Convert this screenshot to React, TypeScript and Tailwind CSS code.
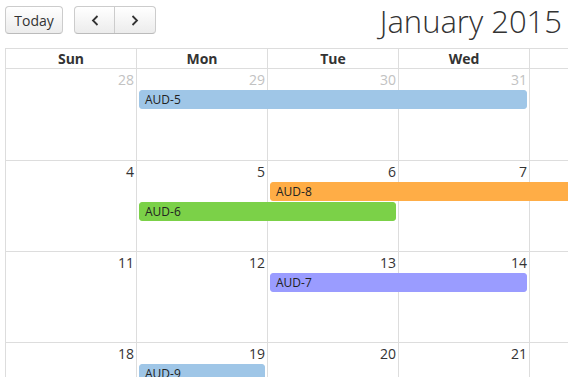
import React from 'react';

type Ev = { title: string; start: number; span: number; row: number; color: string };

type Week = { days: { n: number; other: boolean }[]; events: Ev[]; height: string };

const colStart = ['col-start-1', 'col-start-2', 'col-start-3', 'col-start-4', 'col-start-5', 'col-start-6', 'col-start-7'];
const colSpan = ['col-span-1', 'col-span-2', 'col-span-3', 'col-span-4', 'col-span-5', 'col-span-6', 'col-span-7'];
const rowStart = ['row-start-1', 'row-start-2', 'row-start-3', 'row-start-4'];

const weeks: Week[] = [
  {
    height: 'h-[92px]',
    days: [28, 29, 30, 31].map((n) => ({ n, other: true })).concat([1, 2, 3].map((n) => ({ n, other: false }))),
    events: [{ title: 'AUD-5', start: 1, span: 3, row: 1, color: 'bg-[#9fc6e7] border-[#9fc6e7]' }],
  },
  {
    height: 'h-[91px]',
    days: [4, 5, 6, 7, 8, 9, 10].map((n) => ({ n, other: false })),
    events: [
      { title: 'AUD-8', start: 2, span: 5, row: 1, color: 'bg-[#ffad46] border-[#ffad46]' },
      { title: 'AUD-6', start: 1, span: 2, row: 2, color: 'bg-[#7bd148] border-[#7bd148]' },
    ],
  },
  {
    height: 'h-[91px]',
    days: [11, 12, 13, 14, 15, 16, 17].map((n) => ({ n, other: false })),
    events: [{ title: 'AUD-7', start: 2, span: 2, row: 1, color: 'bg-[#9a9cff] border-[#9a9cff]' }],
  },
  {
    height: 'h-[91px]',
    days: [18, 19, 20, 21, 22, 23, 24].map((n) => ({ n, other: false })),
    events: [{ title: 'AUD-9', start: 1, span: 1, row: 1, color: 'bg-[#9fc6e7] border-[#9fc6e7]' }],
  },
  {
    height: 'h-[91px]',
    days: [25, 26, 27, 28, 29, 30, 31].map((n) => ({ n, other: false })),
    events: [],
  },
];

const dayNames = ['Sun', 'Mon', 'Tue', 'Wed', 'Thu', 'Fri', 'Sat'];

const Chevron = ({ dir }: { dir: 'left' | 'right' }) => (
  <svg width="8" height="11" viewBox="0 0 8 11" fill="none">
    <path
      d={dir === 'left' ? 'M6.5 1 L2 5.5 L6.5 10' : 'M1.5 1 L6 5.5 L1.5 10'}
      stroke="#333"
      strokeWidth="1.8"
    />
  </svg>
);

const App: React.FC = () => {
  return (
    <div
      className="w-[568px] h-[377px] overflow-hidden bg-white text-[#333]"
      style={{ fontFamily: '"Open Sans", "DejaVu Sans", sans-serif' }}
    >
      <div className="pt-[6px] pl-[5px]">
        {/* toolbar */}
        <div className="flex justify-between items-start w-[557px] h-[28px] mb-[14px]">
          <div className="flex gap-[11px]">
            <button className="h-[28px] w-[58px] rounded-[4px] border border-[#ccc] border-b-[#bbb] bg-[linear-gradient(#ffffff,#ececec)] text-[14px] text-[#333] shadow-[inset_0_1px_0_rgba(255,255,255,0.3)]">
              Today
            </button>
            <div className="flex h-[28px] rounded-[4px] border border-[#ccc] border-b-[#bbb] bg-[linear-gradient(#ffffff,#ececec)] overflow-hidden">
              <button className="w-[40px] flex items-center justify-center border-r border-[#ccc]">
                <Chevron dir="left" />
              </button>
              <button className="w-[40px] flex items-center justify-center">
                <Chevron dir="right" />
              </button>
            </div>
          </div>
          <h2 className="text-[31px] leading-[30px] font-light text-[#333] whitespace-nowrap">January 2015</h2>
        </div>

        {/* grid */}
        <div className="w-[918px] border-l border-t border-[#ddd]">
          <div className="grid grid-cols-[repeat(7,131px)] border-b border-[#ddd]">
            {dayNames.map((d) => (
              <div key={d} className="border-r border-[#ddd] text-center text-[14px] leading-[19px] font-bold">
                {d}
              </div>
            ))}
          </div>
          {weeks.map((w, wi) => (
            <div
              key={wi}
              className={`grid grid-cols-[repeat(7,131px)] grid-rows-[20px_20px_20px_1fr] border-b border-[#ddd] ${w.height}`}
            >
              {w.days.map((d, i) => (
                <div key={'c' + i} className={`${colStart[i]} row-span-full row-start-1 border-r border-[#ddd]`} />
              ))}
              {w.days.map((d, i) => (
                <div
                  key={'n' + i}
                  className={`${colStart[i]} row-start-1 text-right pr-[3px] text-[14px] leading-[21px] ${d.other ? 'text-[#c2c2c2]' : 'text-[#333]'}`}
                >
                  {d.n}
                </div>
              ))}
              {w.events.map((e) => (
                <div
                  key={e.title}
                  className={`${colStart[e.start]} ${colSpan[e.span - 1]} ${rowStart[e.row]} mt-px ml-[2px] mr-[3px] h-[19px] rounded-[3px] border pl-[5px] text-[12px] leading-[17px] text-[#222] whitespace-nowrap ${e.color}`}
                >
                  {e.title}
                </div>
              ))}
            </div>
          ))}
        </div>
      </div>
    </div>
  );
};

export default App;
